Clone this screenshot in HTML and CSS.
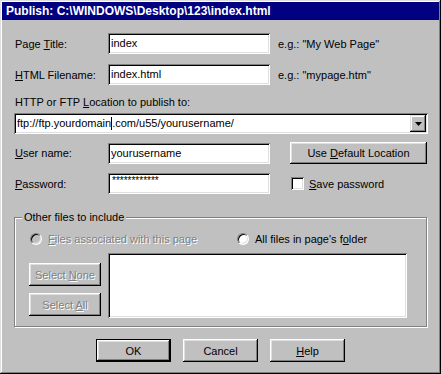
FILE: index.html
```html
<!DOCTYPE html>
<html>
<head>
<meta charset="utf-8">
<title>Publish</title>
<link rel="stylesheet" href="styles.css">
</head>
<body>
<div class="window">
  <div class="titlebar">Publish: C:\WINDOWS\Desktop\123\index.html</div>
  <div class="content">
    <div class="row r1">
      <span class="label">Page <u>T</u>itle:</span>
      <div class="field">index</div>
      <span class="hint">e.g.: "My Web Page"</span>
    </div>
    <div class="row r2">
      <span class="label"><u>H</u>TML Filename:</span>
      <div class="field">index.html</div>
      <span class="hint">e.g.: "mypage.htm"</span>
    </div>
    <div class="loclabel">HTTP or FTP <u>L</u>ocation to publish to:</div>
    <div class="combo">
      <div class="combo-text">ftp://ftp.yourdomain<span class="caret"></span>.com/u55/yourusername/</div>
      <div class="combo-btn">
        <svg width="7" height="4" viewBox="0 0 7 4"><path d="M0 0h7L3.5 4z" fill="#000"/></svg>
      </div>
    </div>
    <div class="row r3">
      <span class="label"><u>U</u>ser name:</span>
      <div class="field">yourusername</div>
      <button class="btn btn-default-loc">Use <u>D</u>efault Location</button>
    </div>
    <div class="row r4">
      <span class="label"><u>P</u>assword:</span>
      <div class="field pw">************</div>
      <span class="check"></span>
      <span class="check-label"><u>S</u>ave password</span>
    </div>
    <div class="group">
      <span class="legend">Other files to include</span>
      <div class="radios">
        <div class="radio-item first">
          <span class="radio disabled"></span>
          <span class="dis"><u>F</u>iles associated with this page</span>
        </div>
        <div class="radio-item">
          <span class="radio"></span>
          <span>All files in page's f<u>o</u>lder</span>
        </div>
      </div>
      <div class="lower">
        <div class="sidebtns">
          <button class="btn small dis">Select <u>N</u>one</button>
          <button class="btn small dis">Select <u>A</u>ll</button>
        </div>
        <div class="listbox"></div>
      </div>
    </div>
  </div>
  <div class="footer">
    <button class="btn foot default">OK</button>
    <button class="btn foot">Cancel</button>
    <button class="btn foot"><u>H</u>elp</button>
  </div>
</div>
</body>
</html>
```
FILE: styles.css
```css
html, body {
  margin: 0;
  padding: 0;
  background: #c0c0c0;
}
body {
  font-family: "Liberation Sans", Arial, sans-serif;
  font-size: 11px;
  color: #000;
}
u { text-decoration: underline; text-underline-offset: 1px; }

.window {
  width: 441px;
  height: 374px;
  box-sizing: border-box;
  background: #c0c0c0;
  padding: 2px 2px 2px 2px;
  box-shadow: inset -1px -1px #000, inset 1px 1px #dfdfdf, inset -2px -2px #808080, inset 2px 2px #fff;
}
.titlebar {
  height: 18px;
  background: #000080;
  color: #fff;
  font-weight: bold;
  font-size: 12px;
  line-height: 18px;
  padding-left: 4px;
  white-space: nowrap;
}
.content {
  padding-left: 13px;
}
.row {
  display: flex;
  align-items: center;
  height: 21px;
}
.r1 { margin-top: 13px; }
.r2 { margin-top: 10px; }
.r3 { margin-top: 8px; height: 22px; }
.r4 { margin-top: 9px; }
.label { width: 93px; white-space: nowrap; }
.field {
  width: 162px;
  height: 21px;
  box-sizing: border-box;
  background: #fff;
  padding: 0 3px;
  line-height: 20px;
  white-space: nowrap;
  box-shadow: inset 1px 1px #808080, inset -1px -1px #fff, inset 2px 2px #000, inset -2px -2px #dfdfdf;
}
.field.pw {
  font-size: 10px;
  line-height: 16px;
  padding-left: 4px;
}
.hint { margin-left: 8px; white-space: nowrap; }
.loclabel {
  margin-top: 11px;
  height: 13px;
  line-height: 13px;
}
.combo {
  margin-top: 4px;
  margin-left: -1px;
  width: 414px;
  height: 21px;
  box-sizing: border-box;
  background: #fff;
  display: flex;
  align-items: center;
  justify-content: space-between;
  padding: 2px;
  box-shadow: inset 1px 1px #808080, inset -1px -1px #fff, inset 2px 2px #000, inset -2px -2px #dfdfdf;
}
.combo-text {
  padding-left: 1px;
  line-height: 17px;
  white-space: nowrap;
}
.caret {
  display: inline-block;
  width: 1px;
  height: 13px;
  background: #000;
  vertical-align: -3px;
}
.combo-btn {
  width: 16px;
  height: 17px;
  box-sizing: border-box;
  background: #c0c0c0;
  display: flex;
  align-items: center;
  justify-content: center;
  box-shadow: inset -1px -1px #000, inset 1px 1px #dfdfdf, inset -2px -2px #808080, inset 2px 2px #fff;
}
.btn {
  font-family: "Liberation Sans", Arial, sans-serif;
  font-size: 11px;
  color: #000;
  background: #c0c0c0;
  border: none;
  margin: 0;
  padding: 0;
  box-sizing: border-box;
  box-shadow: inset -1px -1px #000, inset 1px 1px #fff, inset -2px -2px #808080, inset 2px 2px #dfdfdf;
}
.btn-default-loc {
  margin-left: 20px;
  width: 137px;
  height: 22px;
}
.check {
  margin-left: 21px;
  width: 13px;
  height: 13px;
  box-sizing: border-box;
  background: #fff;
  box-shadow: inset 1px 1px #808080, inset -1px -1px #fff, inset 2px 2px #000, inset -2px -2px #dfdfdf;
}
.check-label { margin-left: 5px; }

.group {
  position: relative;
  margin-top: 23px;
  margin-left: -1px;
  width: 413px;
  height: 110px;
  box-sizing: border-box;
  border: 1px solid #808080;
  box-shadow: inset 1px 1px #fff, 1px 1px #fff;
  padding-left: 14px;
}
.legend {
  position: absolute;
  left: 7px;
  top: -7px;
  padding: 0 2px;
  background: #c0c0c0;
  line-height: 13px;
}
.radios {
  margin-top: 14px;
  margin-left: 1px;
  display: flex;
  height: 13px;
  align-items: center;
}
.radio-item {
  display: flex;
  align-items: center;
  gap: 6px;
  white-space: nowrap;
}
.radio-item.first { width: 207px; }
.radio {
  width: 12px;
  height: 12px;
  box-sizing: border-box;
  border-radius: 50%;
  background: #fff;
  border: 1px solid;
  border-color: #808080 #fff #fff #808080;
  box-shadow: inset 1px 1px #000, inset -1px -1px #dfdfdf;
}
.radio.disabled { background: #c0c0c0; }
.dis {
  color: #808080;
  text-shadow: 1px 1px 0 #fff;
}
.lower {
  display: flex;
  margin-top: 8px;
}
.sidebtns {
  display: flex;
  flex-direction: column;
  gap: 7px;
  margin-top: 10px;
  width: 72px;
}
.btn.small {
  width: 72px;
  height: 23px;
}
.listbox {
  margin-left: 7px;
  width: 299px;
  height: 65px;
  box-sizing: border-box;
  background: #fff;
  box-shadow: inset 1px 1px #808080, inset -1px -1px #fff, inset 2px 2px #000, inset -2px -2px #dfdfdf;
}
.footer {
  margin-top: 12px;
  display: flex;
  justify-content: center;
  gap: 12px;
}
.btn.foot {
  width: 75px;
  height: 23px;
}
.btn.default {
  box-shadow: inset 0 0 0 1px #000, inset -2px -2px #000, inset 2px 2px #fff, inset -3px -3px #808080, inset 3px 3px #dfdfdf;
}
```
